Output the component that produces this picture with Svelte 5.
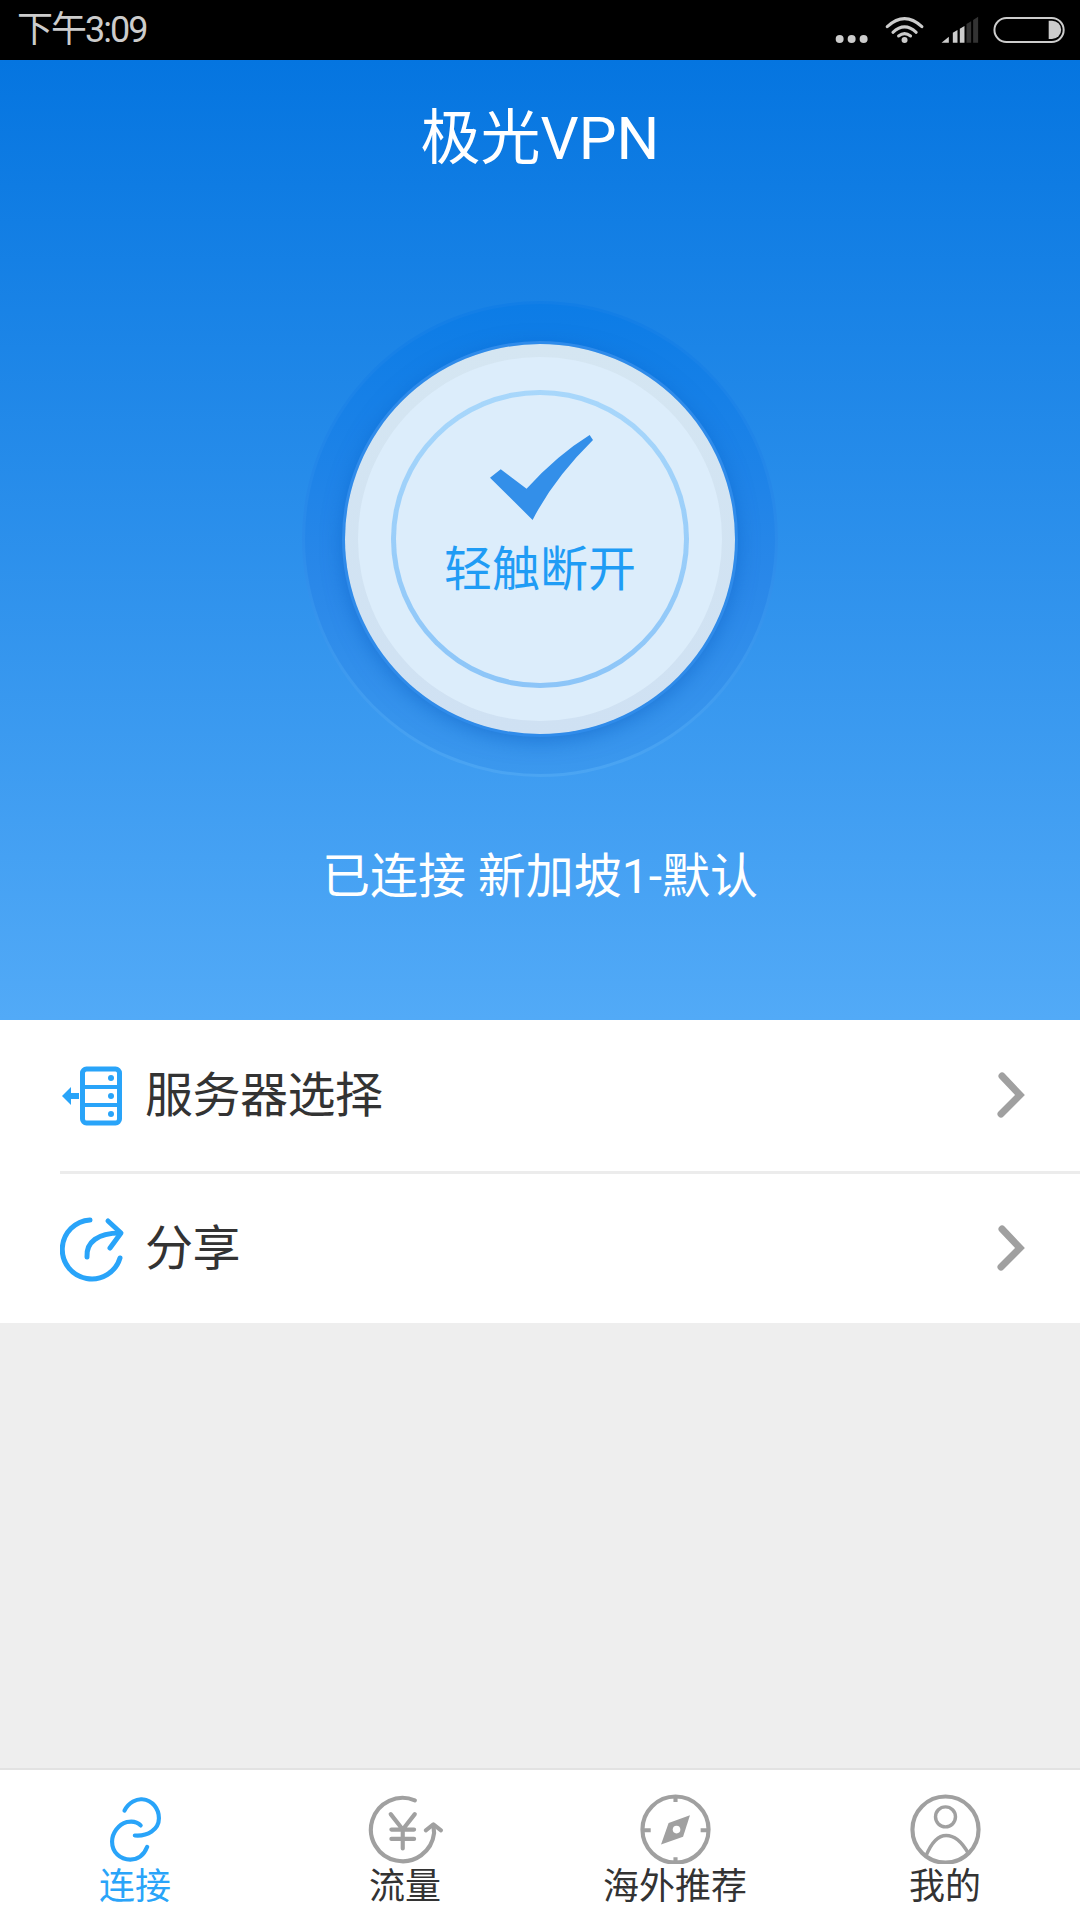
<script>
  const rows = [
    { id: 'server', label: '服务器选择' },
    { id: 'share', label: '分享' }
  ];
  const tabs = [
    { id: 'link', label: '连接', active: true },
    { id: 'flow', label: '流量' },
    { id: 'compass', label: '海外推荐' },
    { id: 'user', label: '我的' }
  ];
</script>

<div class="screen">
  <div class="status-bar">
    <span class="time">下午3:09</span>
    <svg class="status-icons" viewBox="100 45 700 90" width="233" height="30">
      <circle cx="117" cy="117" r="12" fill="#ccc" />
      <circle cx="153" cy="117" r="12" fill="#ccc" />
      <circle cx="189" cy="117" r="12" fill="#ccc" />
      <g fill="none" stroke="#ccc" stroke-width="9" stroke-linecap="round">
        <path d="M260 80 Q312 32 364 80" />
        <path d="M277 97 Q312 64 347 97" />
        <path d="M294 108 Q312 94 330 108" />
      </g>
      <circle cx="312" cy="120" r="9" fill="#ccc" />
      <path d="M423 128 L445 110 V128 Z M457 128 V98 L471 90 V128 Z M478 128 V86 L492 78 V128 Z" fill="#ccc" />
      <path d="M498 128 V72 L512 64 V128 Z M518 128 V60 L533 50 V128 Z" fill="#333" />
      <rect x="582" y="54" width="208" height="72" rx="36" fill="none" stroke="#ccc" stroke-width="6" />
      <path d="M745 62 H755 A27 27 0 0 1 755 117 H745 Z" fill="#ccc" />
    </svg>
  </div>

  <div class="hero">
    <h1>极光VPN</h1>
    <div class="halo">
      <div class="halo-inner">
        <div class="plate">
          <div class="ring">
            <svg class="check" viewBox="0 0 307 253" width="103" height="85">
              <path d="M0 127 L32 102 L109 160 Q200 60 297 0 L307 15 Q190 130 127 253 Z" fill="#338fe9" />
            </svg>
            <span class="action">轻触断开</span>
          </div>
        </div>
      </div>
    </div>
    <p class="state">已连接 新加坡1-默认</p>
  </div>

  <div class="menu">
    {#each rows as row}
      <div class="row">
        <span class="row-icon">
          {#if row.id === 'server'}
            <svg viewBox="0 0 66 60" width="66" height="60" fill="none" stroke="#29a4f9" stroke-width="5">
              <rect x="22.5" y="3" width="37" height="54" rx="4" />
              <path d="M22 21 H60 M22 39 H60" stroke-width="4" />
              <path d="M2 30 L11 21 V39 Z" fill="#29a4f9" stroke="none" />
              <path d="M10 30 H19" stroke-width="6" />
              <g fill="#29a4f9" stroke="none">
                <circle cx="51" cy="12" r="3" />
                <circle cx="51" cy="30" r="3" />
                <circle cx="51" cy="48" r="3" />
              </g>
            </svg>
          {:else}
            <svg viewBox="0 0 66 66" width="66" height="66" fill="none" stroke="#29a4f9" stroke-width="5" stroke-linecap="round" stroke-linejoin="round">
              <path d="M30 4 A29.5 29.5 0 1 0 60 42" />
              <path d="M27 41 C26 26 38 17 60 17" />
              <path d="M48 5 L61 17 L50 32" />
            </svg>
          {/if}
        </span>
        <span class="row-label">{row.label}</span>
        <svg class="chevron" viewBox="0 0 28 46" width="28" height="46">
          <path d="M5 4 L23 23 L4 42" fill="none" stroke="#a0a0a0" stroke-width="7" stroke-linecap="round" stroke-linejoin="miter" />
        </svg>
      </div>
    {/each}
  </div>

  <div class="filler"></div>

  <div class="tabs">
    {#each tabs as tab}
      <div class="tab" class:active={tab.active}>
        {#if tab.id === 'link'}
          <svg viewBox="270 90 240 216" width="83" height="74.4" fill="none" stroke="#29a4f9" stroke-width="12" stroke-linecap="round">
            <path d="M358 150 C370 125 395 115 410 117 C440 120 458 145 458 172 C458 205 425 225 388 222" />
            <path d="M405 193 C395 182 380 180 365 183 C340 190 322 215 322 240 C322 270 345 292 375 292 C398 292 415 278 424 255" />
          </svg>
        {:else if tab.id === 'flow'}
          <svg viewBox="1053 90 240 216" width="83" height="74.4" fill="none" stroke="#a0a0a0" stroke-width="12" stroke-linecap="round" stroke-linejoin="round">
            <path d="M1200 120 A92 92 0 1 0 1256 215 L1254 192" />
            <path d="M1232 207 L1254 190 L1276 207" />
            <path d="M1130 160 L1165 205 L1200 160 M1165 205 V260 M1132 205 H1198 M1132 232 H1198" />
          </svg>
        {:else if tab.id === 'compass'}
          <svg viewBox="270 90 240 216" width="83" height="74.4" fill="none" stroke="#a0a0a0" stroke-width="12">
            <circle cx="390" cy="205" r="96" />
            <path d="M390 105 V125 M390 285 V305 M295 207 H318 M463 207 H486" />
            <path d="M432 163 L412 226 L348 248 L370 186 Z" fill="#a0a0a0" stroke="none" />
            <circle cx="393" cy="205" r="11" fill="#fff" stroke="none" />
          </svg>
        {:else}
          <svg viewBox="1055 90 240 216" width="83" height="74.4" fill="none" stroke="#a0a0a0" stroke-width="12">
            <circle cx="1175" cy="205" r="96" />
            <circle cx="1175" cy="168" r="29" stroke-width="10" />
            <path d="M1118 282 C1135 240 1155 222 1177 222 C1200 222 1222 240 1240 272" stroke-width="10" />
          </svg>
        {/if}
        <span class="tab-label">{tab.label}</span>
      </div>
    {/each}
  </div>
</div>

<style>
  :global(body) { margin: 0; }

  .screen {
    width: 1080px;
    height: 1920px;
    display: flex;
    flex-direction: column;
    background: #eeeeee;
    font-family: Roboto, "Noto Sans CJK SC", sans-serif;
    overflow: hidden;
  }

  .status-bar {
    height: 60px;
    flex-shrink: 0;
    background: #000;
    display: flex;
    align-items: center;
    justify-content: space-between;
    padding: 0 13px 0 17px;
  }
  .time { color: #ccc; font-size: 36px; letter-spacing: -2px; line-height: 60px; }
  .status-icons { display: block; }

  .hero {
    height: 960px;
    flex-shrink: 0;
    display: flex;
    flex-direction: column;
    align-items: center;
    background: linear-gradient(180deg, #0575e0 0%, #52aaf7 100%);
    color: #fff;
  }
  h1 {
    margin: 0;
    height: 154px;
    padding-top: 4px;
    box-sizing: border-box;
    font-size: 60px;
    font-weight: 400;
    line-height: 150px;
  }

  .halo {
    margin-top: 87px;
    width: 476px;
    height: 476px;
    padding: 3px;
    border-radius: 50%;
    box-sizing: border-box;
    background: linear-gradient(180deg, #127ee6 0%, #2b8bea 50%, #4ba5f3 100%);
  }
  .halo-inner {
    height: 100%;
    border-radius: 50%;
    display: flex;
    align-items: center;
    justify-content: center;
    background: linear-gradient(180deg, #0c7ce6 0%, #2a88e9 60%, #3b98ee 100%);
  }
  .plate {
    width: 390px;
    height: 390px;
    flex-shrink: 0;
    border-radius: 50%;
    box-sizing: border-box;
    border: 13px solid transparent;
    background: linear-gradient(#dcedfb, #dcedfb) padding-box, linear-gradient(180deg, #d5e6f2, #cfe1f3) border-box;
    display: flex;
    align-items: center;
    justify-content: center;
    box-shadow: 0 0 0 3px #2f8bea, 0 5px 22px rgba(5, 90, 190, 0.55);
  }
  .ring {
    width: 298px;
    height: 298px;
    flex-shrink: 0;
    border-radius: 50%;
    box-sizing: border-box;
    border: 5px solid transparent;
    background: linear-gradient(#dcedfb, #dcedfb) padding-box, linear-gradient(180deg, #a8d7fb, #8cc5f8) border-box;
    display: flex;
    flex-direction: column;
    align-items: center;
    padding-top: 40px;
  }
  .check { display: block; transform: translateX(1px); }
  .action {
    margin-top: 20px;
    font-size: 48px;
    line-height: 60px;
    color: #1f9cf5;
  }

  .state {
    margin: 70px 0 0;
    font-size: 48px;
    line-height: 60px;
    white-space: pre;
  }

  .menu { background: #fff; flex-shrink: 0; }
  .row {
    height: 151px;
    margin-left: 60px;
    padding-right: 55px;
    display: flex;
    align-items: center;
  }
  .row:first-child { border-bottom: 3px solid #ececec; }
  .row:last-child { height: 149px; }
  .row-icon { width: 85px; display: flex; align-items: center; }
  .row-icon svg { display: block; }
  .row-label { flex: 1; font-size: 48px; letter-spacing: -0.5px; padding-bottom: 10px; color: #333; }
  .chevron { display: block; margin-bottom: 2px; }

  .filler { flex: 1; }

  .tabs {
    height: 150px;
    flex-shrink: 0;
    display: grid;
    grid-template-columns: repeat(4, 1fr);
    background: #fff;
    border-top: 2px solid #e2e2e2;
  }
  .tab {
    display: flex;
    flex-direction: column;
    align-items: center;
    padding-top: 20px;
    color: #333;
  }
  .tab svg { display: block; }
  .tab-label { font-size: 36px; line-height: 44px; margin-top: 1px; white-space: nowrap; }
  .tab.active .tab-label { color: #29a4f9; }
</style>
